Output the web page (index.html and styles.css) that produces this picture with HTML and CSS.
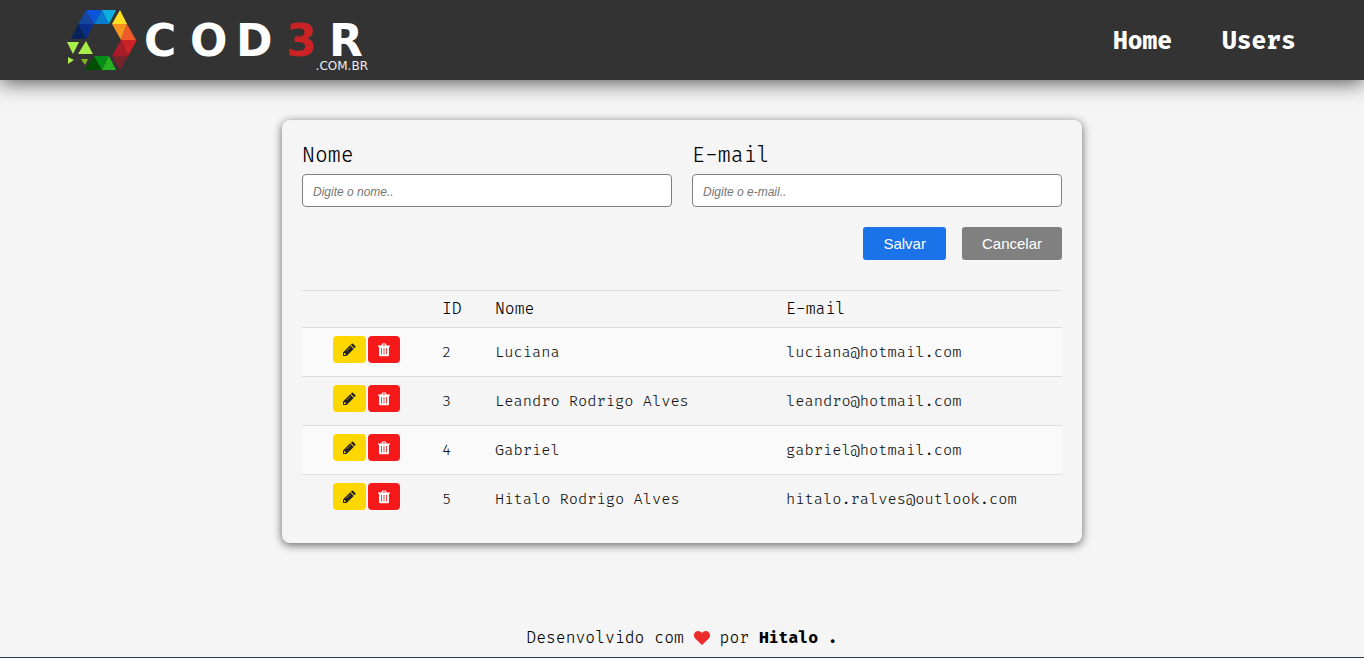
FILE: index.html
```html
<!DOCTYPE html>
<html lang="pt-BR">
<head>
<meta charset="utf-8">
<meta name="viewport" content="width=device-width, initial-scale=1">
<title>Users</title>
<link rel="stylesheet" href="styles.css">
</head>
<body>
<svg class="sprite" aria-hidden="true">
  <symbol id="pencil" viewBox="0 0 14 14">
    <path fill-rule="evenodd" d="M1 9.400 8.100 2.300l3.600 3.600L4.600 13H1zM2 10.600V12h1.400l.6-.6-1.400-1.400zM8.200 4 4.400 7.800l.3.300 3.800-3.800z"/>
    <path d="m8.800 1.700 1-1q.6-.5 1.200 0l2.300 2.300q.5.600 0 1.200l-1 1z"/>
  </symbol>
  <symbol id="trash" viewBox="0 0 14 14">
    <path fill-rule="evenodd" d="M4.300 2.500 5 1q.2-.5.700-.5h2.600q.500 0 .700.500l.700 1.500H13v1.300h-1V12q0 1.300-1.200 1.300H3.200Q2 13.300 2 12V3.800H1V2.500zM5.600 2.500h2.800L8 1.500H6zM4.200 5v6.600h.8V5zM6.600 5v6.600h.8V5zM9 5v6.600h.8V5z"/>
  </symbol>
</svg>

<header class="topbar">
  <a class="logo" href="#" aria-label="Cod3r">
    <svg width="300" height="64" viewBox="68 8 300 64">
      <path fill="#1746a2" d="M86 10 78 24H94z"/>
      <path fill="#0b54dd" d="M86 10h16l-8 14z"/>
      <path fill="#077bd0" d="m102 10-8 14h15z"/>
      <path fill="#0eafe0" d="M102 10h14l-7 14z"/>
      <path fill="#092f8b" d="M78 24h16l-8 15z"/>
      <path fill="#0a225a" d="m78 24-7 15h15z"/>
      <path fill="#ffdf25" d="m120 10 7 14h-15z"/>
      <path fill="#f7941d" d="M112 24h15l-6 16z"/>
      <path fill="#f15a29" d="m127 24 9 16h-15z"/>
      <path fill="#ca2225" d="M121 40h16l-9 16z"/>
      <path fill="#a91c29" d="m121 40-9 16h16z"/>
      <path fill="#78232b" d="M112 56h16l-8 14z"/>
      <path fill="#005000" d="m94 56-9 14h17z"/>
      <path fill="#078b18" d="M94 56h15l-7 14z"/>
      <path fill="#27b320" d="m109 56 7 14h-14z"/>
      <path fill="#a9ed4b" d="M67 42h12l-6 12zM86 41l7 13H78zM68 57l6 3-6 4z"/>
      <path fill="#7fba19" d="M81 59h7l-3 6z"/>
      <g class="wordmark">
        <text x="144" y="56">C</text>
        <text x="190" y="56">O</text>
        <text x="236" y="56">D</text>
        <text class="accent" x="286" y="56">3</text>
        <text x="329" y="56">R</text>
      </g>
      <text class="domain" x="368" y="70">.COM.BR</text>
    </svg>
  </a>
  <nav class="menu">
    <a href="#">Home</a>
    <a href="#">Users</a>
  </nav>
</header>

<main class="content">
  <section class="card">
    <form class="form">
      <div class="fields">
        <div class="field">
          <label for="name">Nome</label>
          <input id="name" type="text" placeholder="Digite o nome..">
        </div>
        <div class="field">
          <label for="email">E-mail</label>
          <input id="email" type="text" placeholder="Digite o e-mail..">
        </div>
      </div>
      <div class="actions">
        <button class="btn save" type="button">Salvar</button>
        <button class="btn cancel" type="button">Cancelar</button>
      </div>
    </form>
    <table class="users">
      <colgroup><col class="col-actions"><col class="col-id"><col class="col-name"><col></colgroup>
      <thead>
        <tr><th></th><th>ID</th><th>Nome</th><th>E-mail</th></tr>
      </thead>
      <tbody>
        <tr>
          <td><div class="tools"><button class="tool edit" type="button" aria-label="Editar"><svg><use href="#pencil"/></svg></button><button class="tool remove" type="button" aria-label="Excluir"><svg><use href="#trash"/></svg></button></div></td>
          <td>2</td><td>Luciana</td><td>luciana@hotmail.com</td>
        </tr>
        <tr>
          <td><div class="tools"><button class="tool edit" type="button" aria-label="Editar"><svg><use href="#pencil"/></svg></button><button class="tool remove" type="button" aria-label="Excluir"><svg><use href="#trash"/></svg></button></div></td>
          <td>3</td><td>Leandro Rodrigo Alves</td><td>leandro@hotmail.com</td>
        </tr>
        <tr>
          <td><div class="tools"><button class="tool edit" type="button" aria-label="Editar"><svg><use href="#pencil"/></svg></button><button class="tool remove" type="button" aria-label="Excluir"><svg><use href="#trash"/></svg></button></div></td>
          <td>4</td><td>Gabriel</td><td>gabriel@hotmail.com</td>
        </tr>
        <tr>
          <td><div class="tools"><button class="tool edit" type="button" aria-label="Editar"><svg><use href="#pencil"/></svg></button><button class="tool remove" type="button" aria-label="Excluir"><svg><use href="#trash"/></svg></button></div></td>
          <td>5</td><td>Hitalo Rodrigo Alves</td><td>hitalo.ralves@outlook.com</td>
        </tr>
      </tbody>
    </table>
  </section>
</main>

<footer class="footer">
  <p>Desenvolvido com <svg class="heart" viewBox="0 0 16 14" role="img" aria-label="amor"><path d="M8 14 1.200 7.500C-1.500 4.500.5 0 4.200 0 6 0 7.200 1 8 2.200 8.800 1 10 0 11.800 0c3.700 0 5.700 4.500 3 7.500z"/></svg> por <strong>Hitalo .</strong></p>
</footer>
</body>
</html>
```

FILE: styles.css
```css
* {
  box-sizing: border-box;
}

body {
  margin: 0;
  min-height: 100vh;
  display: flex;
  flex-direction: column;
  background: #f5f5f5;
  color: #000;
  font-family: "Fira Code", "Liberation Mono", monospace;
  font-weight: 300;
}

.sprite {
  display: none;
}

.topbar {
  display: flex;
  align-items: center;
  justify-content: space-between;
  height: 80px;
  padding: 0 5%;
  background: #333;
  box-shadow: 0 2px 20px rgba(0, 0, 0, 0.7);
}

.logo,
.logo svg {
  display: block;
  overflow: visible;
}

.wordmark {
  fill: #fff;
  font: bold 44px "DejaVu Sans", sans-serif;
}

.wordmark .accent {
  fill: #ca2225;
}

.domain {
  fill: #eee;
  font: 12px "DejaVu Sans", sans-serif;
  text-anchor: end;
}

.menu {
  display: flex;
  gap: 50px;
  padding-top: 2px;
}

.menu a {
  color: #fff;
  font-size: 24px;
  font-weight: 700;
  text-decoration: none;
}

.content {
  flex: 1;
  padding: 40px 20px;
}

.card {
  max-width: 800px;
  margin: 0 auto;
  padding: 20px;
  border-radius: 8px;
  background: #f5f5f5;
  box-shadow: 0 2px 10px rgba(0, 0, 0, 0.6);
}

.fields {
  display: grid;
  grid-template-columns: 1fr 1fr;
  gap: 20px;
}

.field label {
  display: block;
  margin-bottom: 2px;
  font-size: 21px;
  line-height: 32px;
}

.field input {
  display: block;
  width: 100%;
  height: 33px;
  padding: 2px 10px 0;
  border: 1px solid #808080;
  border-radius: 4px;
  background: #fff;
  font: 12px "Liberation Sans", Arial, sans-serif;
}

.field input::placeholder {
  color: #757575;
  font-style: italic;
}

.actions {
  display: flex;
  justify-content: flex-end;
  gap: 16px;
  margin: 20px 0 30px;
}

.btn {
  height: 33px;
  padding: 0 20px;
  border: 0;
  border-radius: 3px;
  color: #fff;
  font: 15px "Liberation Sans", Arial, sans-serif;
}

.save {
  background: #1a73e8;
}

.cancel {
  background: #808080;
}

.users {
  width: 100%;
  table-layout: fixed;
  border-collapse: collapse;
  font-size: 15px;
  color: #111;
}

.col-actions {
  width: 128px;
}

.col-id {
  width: 53px;
}

.col-name {
  width: 291px;
}

.users th,
.users td {
  padding: 0 12px;
  border-top: 1px solid #ddd;
  text-align: left;
}

.users th {
  height: 37px;
  font-size: 16px;
  font-weight: 300;
  color: #000;
}

.users td:first-child {
  padding: 8px 12px 13px;
}

.users tbody tr:nth-child(odd) {
  background: #fafafa;
}

.tools {
  display: flex;
  justify-content: center;
  gap: 2px;
}

.tool {
  display: flex;
  align-items: center;
  justify-content: center;
  width: 33px;
  height: 27px;
  padding: 0;
  border: 0;
  border-radius: 4px;
}

.tool svg {
  width: 14px;
  height: 14px;
  fill: currentColor;
}

.edit {
  background: #ffd700;
  color: #222;
}

.remove {
  width: 32px;
  background: #f51919;
  color: #fff;
}

.footer {
  border-bottom: 1px solid #2b3a48;
}

.footer p {
  margin: 0;
  padding-bottom: 9px;
  text-align: center;
  font-size: 16px;
  line-height: 20px;
}

.footer strong {
  font-weight: 700;
}

.heart {
  width: 16px;
  height: 14px;
  fill: #ee2b2b;
  vertical-align: -2px;
}
```
